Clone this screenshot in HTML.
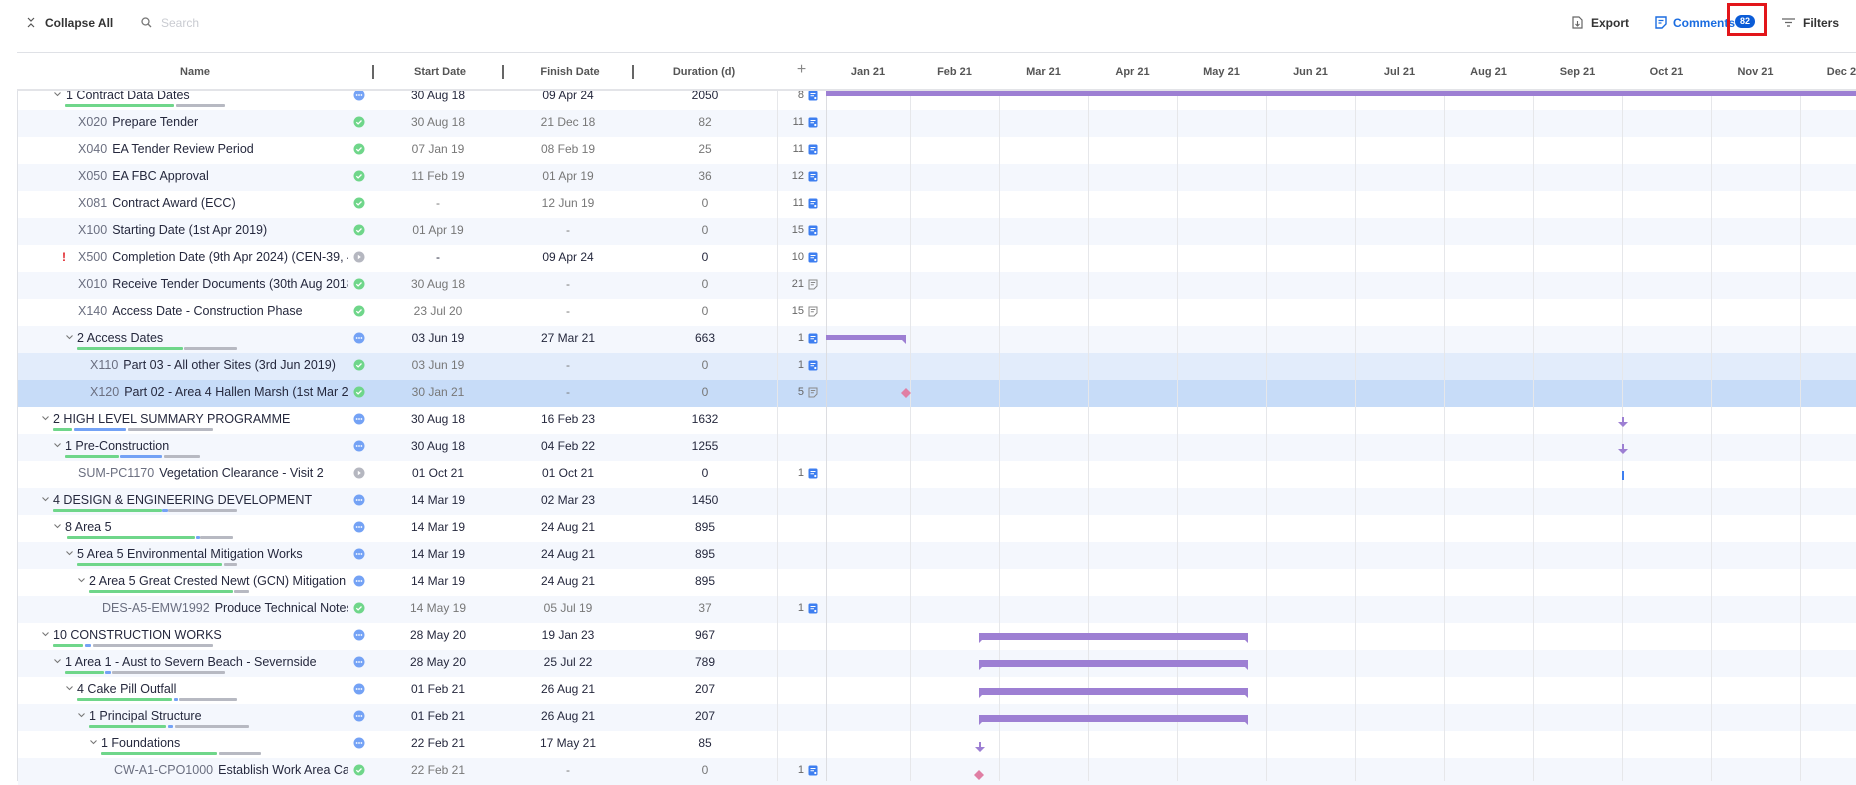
<!DOCTYPE html>
<html><head><meta charset="utf-8"><style>
*{margin:0;padding:0;box-sizing:border-box}
body{width:1856px;height:781px;overflow:hidden;background:#fff;font-family:"Liberation Sans",sans-serif;font-size:12px;color:#25283d;position:relative}
.a{position:absolute}
.tb{top:14px;line-height:18px;font-size:12px;color:#333;font-weight:bold}
.hd{position:absolute;top:52px;height:39px;left:17px;right:0;border-top:1px solid #dfe1e6;border-bottom:2px solid #e3e4e8;background:#fff;z-index:3}
.hl{position:absolute;top:12px;font-size:11px;font-weight:bold;color:#555;text-align:center;line-height:14px}
.sep{position:absolute;top:12px;width:2px;height:14px;background:#666}
.r{position:absolute;left:18px;right:0;height:27px}
.t{background:#f4f7fd}
.r>span{position:absolute;top:0;line-height:25px;white-space:nowrap}
.r>span.n{font-size:12.5px;overflow:hidden}
.c{color:#6b6f80;margin-right:5px}
.sd{left:360px;width:120px;text-align:center}
.fd{left:490px;width:120px;text-align:center}
.du{left:622px;width:130px;text-align:center}
.g{color:#777}
.cn{left:720px;width:66px;text-align:right;color:#666;font-size:11px}
.ci{position:absolute;left:790px;top:7px}
.st{position:absolute;left:335px;top:6px}
.ch{position:absolute;top:9px}
.pb{position:absolute;top:21px;height:3px;border-radius:1px}
.gr{background:#6fd68a}.bl{background:#74a2f5}.gy{background:#b7b9c2}
.vl{position:absolute;top:52px;bottom:0;width:1px;background:#e6e7ea;z-index:2}
.bar{position:absolute;height:5px;background:#9d7fd3;z-index:4}
</style></head><body>

<svg class="a" style="left:27px;top:17px" width="8" height="11" viewBox="0 0 8 11"><path d="M1 1l3 3 3-3M1 10l3-3 3 3" stroke="#555" fill="none" stroke-width="1.2"/></svg>
<span class="a tb" style="left:45px">Collapse All</span>
<svg class="a" style="left:141px;top:17px" width="11" height="11" viewBox="0 0 11 11"><circle cx="4.5" cy="4.5" r="3.5" stroke="#777" fill="none" stroke-width="1.3"/><path d="M7 7l3 3" stroke="#777" stroke-width="1.3"/></svg>
<span class="a tb" style="left:161px;color:#c9cbd1;font-weight:normal">Search</span>

<svg class="a" style="left:1572px;top:16px" width="11" height="13" viewBox="0 0 11 13"><path d="M1 1h6l3 3v8H1z" stroke="#666" fill="none" stroke-width="1.2"/><path d="M5.5 5v5M3.5 8l2 2 2-2" stroke="#666" fill="none" stroke-width="1.1"/></svg>
<span class="a tb" style="left:1591px">Export</span>
<svg class="a" style="left:1655px;top:16px" width="12" height="13" viewBox="0 0 12 13"><path d="M1 1h10v7l-4 4H1z" stroke="#1a6ce0" fill="none" stroke-width="1.4"/><path d="M3.5 4.5h5M3.5 7h3" stroke="#1a6ce0" stroke-width="1.3"/></svg>
<span class="a tb" style="left:1673px;color:#1a6ce0">Comments</span>
<div class="a" style="left:1735px;top:15px;width:20px;height:13px;border-radius:7px;background:#0b5cd7;color:#fff;font-size:9px;font-weight:bold;text-align:center;line-height:13px">82</div>
<div class="a" style="left:1727px;top:3px;width:40px;height:33px;border:3px solid #e2161a"></div>
<svg class="a" style="left:1782px;top:18px" width="13" height="9" viewBox="0 0 13 9"><path d="M0 1h13M3 4.5h7M5 8h3" stroke="#666" stroke-width="1.3"/></svg>
<span class="a tb" style="left:1803px">Filters</span>

<div class="hd">
<span class="hl" style="left:0;width:356px">Name</span>
<div class="sep" style="left:355px"></div>
<span class="hl" style="left:360px;width:126px">Start Date</span>
<div class="sep" style="left:485px"></div>
<span class="hl" style="left:490px;width:126px">Finish Date</span>
<div class="sep" style="left:615px"></div>
<span class="hl" style="left:622px;width:130px">Duration (d)</span>
<span class="hl" style="left:760px;width:49px;font-size:16px;font-weight:normal;color:#888;top:10px">+</span>
<span class="hl" style="left:809px;width:84px">Jan 21</span>
<span class="hl" style="left:893px;width:89px">Feb 21</span>
<span class="hl" style="left:982px;width:89px">Mar 21</span>
<span class="hl" style="left:1071px;width:89px">Apr 21</span>
<span class="hl" style="left:1160px;width:89px">May 21</span>
<span class="hl" style="left:1249px;width:89px">Jun 21</span>
<span class="hl" style="left:1338px;width:89px">Jul 21</span>
<span class="hl" style="left:1427px;width:89px">Aug 21</span>
<span class="hl" style="left:1516px;width:89px">Sep 21</span>
<span class="hl" style="left:1605px;width:89px">Oct 21</span>
<span class="hl" style="left:1694px;width:89px">Nov 21</span>
<span class="hl" style="left:1783px;width:89px">Dec 21</span>
</div>

<div class="vl" style="left:17px;background:#dfe1e6"></div>
<div class="vl" style="left:777px"></div>
<div class="vl" style="left:826px;background:#dcdde1"></div>
<div class="vl" style="left:910px"></div>
<div class="vl" style="left:999px"></div>
<div class="vl" style="left:1088px"></div>
<div class="vl" style="left:1177px"></div>
<div class="vl" style="left:1266px"></div>
<div class="vl" style="left:1355px"></div>
<div class="vl" style="left:1444px"></div>
<div class="vl" style="left:1533px"></div>
<div class="vl" style="left:1622px"></div>
<div class="vl" style="left:1711px"></div>
<div class="vl" style="left:1800px"></div>

<svg width="0" height="0" style="position:absolute"><defs>
<g id="ok"><circle cx="6" cy="6" r="5.5" fill="#6fd68a"/><path d="M3.3 6.2l1.8 1.7 3.4-3.4" stroke="#fff" fill="none" stroke-width="1.3"/></g>
<g id="dt"><circle cx="6" cy="6" r="5.5" fill="#74a2f5"/><circle cx="3.6" cy="6" r=".9" fill="#fff"/><circle cx="6" cy="6" r=".9" fill="#fff"/><circle cx="8.4" cy="6" r=".9" fill="#fff"/></g>
<g id="gs"><circle cx="6" cy="6" r="5.5" fill="#b5b7c0"/><path d="M4.8 3.8l3 2.2-3 2.2z" fill="#fff"/></g>
<g id="cb"><rect x=".5" y=".5" width="9" height="10" rx="1.5" fill="#3d7ef0"/><path d="M2.5 3.5h5M2.5 5.8h3.5" stroke="#fff" stroke-width="1"/><circle cx="7.3" cy="8" r="1.1" fill="#fff"/></g>
<g id="cg"><path d="M1 1h8v6l-3 3H1z" stroke="#888" fill="none" stroke-width="1"/><path d="M2.8 3.5h4.4M2.8 5.8h3" stroke="#888" stroke-width="1"/></g>
<g id="cv"><path d="M.5 .5l3 3 3-3" stroke="#777" fill="none" stroke-width="1.1"/></g>
</defs></svg>

<div class="r" style="top:83px"><svg class="ch" style="left:36px" width="7" height="5"><use href="#cv"/></svg><span class="n" style="left:48px;width:282px">1 Contract Data Dates</span><div class="pb gr" style="left:47px;width:109px"></div><div class="pb gy" style="left:158px;width:49px"></div><svg class="st" width="12" height="12"><use href="#dt"/></svg><span class="sd">30 Aug 18</span><span class="fd">09 Apr 24</span><span class="du">2050</span><span class="cn">8</span><svg class="ci" width="10" height="11"><use href="#cb"/></svg></div>
<div class="r t" style="top:110px"><span class="n" style="left:60px;width:270px"><span class="c">X020</span>Prepare Tender</span><svg class="st" width="12" height="12"><use href="#ok"/></svg><span class="sd g">30 Aug 18</span><span class="fd g">21 Dec 18</span><span class="du g">82</span><span class="cn">11</span><svg class="ci" width="10" height="11"><use href="#cb"/></svg></div>
<div class="r" style="top:137px"><span class="n" style="left:60px;width:270px"><span class="c">X040</span>EA Tender Review Period</span><svg class="st" width="12" height="12"><use href="#ok"/></svg><span class="sd g">07 Jan 19</span><span class="fd g">08 Feb 19</span><span class="du g">25</span><span class="cn">11</span><svg class="ci" width="10" height="11"><use href="#cb"/></svg></div>
<div class="r t" style="top:164px"><span class="n" style="left:60px;width:270px"><span class="c">X050</span>EA FBC Approval</span><svg class="st" width="12" height="12"><use href="#ok"/></svg><span class="sd g">11 Feb 19</span><span class="fd g">01 Apr 19</span><span class="du g">36</span><span class="cn">12</span><svg class="ci" width="10" height="11"><use href="#cb"/></svg></div>
<div class="r" style="top:191px"><span class="n" style="left:60px;width:270px"><span class="c">X081</span>Contract Award (ECC)</span><svg class="st" width="12" height="12"><use href="#ok"/></svg><span class="sd g">-</span><span class="fd g">12 Jun 19</span><span class="du g">0</span><span class="cn">11</span><svg class="ci" width="10" height="11"><use href="#cb"/></svg></div>
<div class="r t" style="top:218px"><span class="n" style="left:60px;width:270px"><span class="c">X100</span>Starting Date (1st Apr 2019)</span><svg class="st" width="12" height="12"><use href="#ok"/></svg><span class="sd g">01 Apr 19</span><span class="fd g">-</span><span class="du g">0</span><span class="cn">15</span><svg class="ci" width="10" height="11"><use href="#cb"/></svg></div>
<div class="r" style="top:245px"><span style="left:44px;color:#e0242a;font-weight:bold">!</span><span class="n" style="left:60px;width:270px"><span class="c">X500</span>Completion Date (9th Apr 2024) (CEN-39, 40)</span><svg class="st" width="12" height="12"><use href="#gs"/></svg><span class="sd">-</span><span class="fd">09 Apr 24</span><span class="du">0</span><span class="cn">10</span><svg class="ci" width="10" height="11"><use href="#cb"/></svg></div>
<div class="r t" style="top:272px"><span class="n" style="left:60px;width:270px"><span class="c">X010</span>Receive Tender Documents (30th Aug 2018)</span><svg class="st" width="12" height="12"><use href="#ok"/></svg><span class="sd g">30 Aug 18</span><span class="fd g">-</span><span class="du g">0</span><span class="cn">21</span><svg class="ci" width="10" height="11"><use href="#cg"/></svg></div>
<div class="r" style="top:299px"><span class="n" style="left:60px;width:270px"><span class="c">X140</span>Access Date - Construction Phase</span><svg class="st" width="12" height="12"><use href="#ok"/></svg><span class="sd g">23 Jul 20</span><span class="fd g">-</span><span class="du g">0</span><span class="cn">15</span><svg class="ci" width="10" height="11"><use href="#cg"/></svg></div>
<div class="r t" style="top:326px"><svg class="ch" style="left:48px" width="7" height="5"><use href="#cv"/></svg><span class="n" style="left:59px;width:271px">2 Access Dates</span><div class="pb gr" style="left:59px;width:106px"></div><div class="pb gy" style="left:166px;width:53px"></div><svg class="st" width="12" height="12"><use href="#dt"/></svg><span class="sd">03 Jun 19</span><span class="fd">27 Mar 21</span><span class="du">663</span><span class="cn">1</span><svg class="ci" width="10" height="11"><use href="#cb"/></svg></div>
<div class="r" style="top:353px;background:#e2ecfb"><span class="n" style="left:72px;width:258px"><span class="c">X110</span>Part 03 - All other Sites (3rd Jun 2019)</span><svg class="st" width="12" height="12"><use href="#ok"/></svg><span class="sd g">03 Jun 19</span><span class="fd g">-</span><span class="du g">0</span><span class="cn">1</span><svg class="ci" width="10" height="11"><use href="#cb"/></svg></div>
<div class="r" style="top:380px;background:#c7dcf8"><span class="n" style="left:72px;width:258px"><span class="c">X120</span>Part 02 - Area 4 Hallen Marsh (1st Mar 2021)</span><svg class="st" width="12" height="12"><use href="#ok"/></svg><span class="sd g">30 Jan 21</span><span class="fd g">-</span><span class="du g">0</span><span class="cn">5</span><svg class="ci" width="10" height="11"><use href="#cg"/></svg></div>
<div class="r" style="top:407px"><svg class="ch" style="left:24px" width="7" height="5"><use href="#cv"/></svg><span class="n" style="left:35px;width:295px">2 HIGH LEVEL SUMMARY PROGRAMME</span><div class="pb gr" style="left:35px;width:19px"></div><div class="pb bl" style="left:56px;width:52px"></div><div class="pb gy" style="left:110px;width:85px"></div><svg class="st" width="12" height="12"><use href="#dt"/></svg><span class="sd">30 Aug 18</span><span class="fd">16 Feb 23</span><span class="du">1632</span></div>
<div class="r t" style="top:434px"><svg class="ch" style="left:36px" width="7" height="5"><use href="#cv"/></svg><span class="n" style="left:47px;width:283px">1 Pre-Construction</span><div class="pb gr" style="left:47px;width:54px"></div><div class="pb bl" style="left:102px;width:42px"></div><div class="pb gy" style="left:146px;width:36px"></div><svg class="st" width="12" height="12"><use href="#dt"/></svg><span class="sd">30 Aug 18</span><span class="fd">04 Feb 22</span><span class="du">1255</span></div>
<div class="r" style="top:461px"><span class="n" style="left:60px;width:270px"><span class="c">SUM-PC1170</span>Vegetation Clearance - Visit 2</span><svg class="st" width="12" height="12"><use href="#gs"/></svg><span class="sd">01 Oct 21</span><span class="fd">01 Oct 21</span><span class="du">0</span><span class="cn">1</span><svg class="ci" width="10" height="11"><use href="#cb"/></svg></div>
<div class="r t" style="top:488px"><svg class="ch" style="left:24px" width="7" height="5"><use href="#cv"/></svg><span class="n" style="left:35px;width:295px">4 DESIGN &amp; ENGINEERING DEVELOPMENT</span><div class="pb gr" style="left:35px;width:109px"></div><div class="pb bl" style="left:144px;width:6px"></div><div class="pb gy" style="left:150px;width:69px"></div><svg class="st" width="12" height="12"><use href="#dt"/></svg><span class="sd">14 Mar 19</span><span class="fd">02 Mar 23</span><span class="du">1450</span></div>
<div class="r" style="top:515px"><svg class="ch" style="left:36px" width="7" height="5"><use href="#cv"/></svg><span class="n" style="left:47px;width:283px">8 Area 5</span><div class="pb gr" style="left:49px;width:128px"></div><div class="pb bl" style="left:178px;width:4px"></div><div class="pb gy" style="left:182px;width:33px"></div><svg class="st" width="12" height="12"><use href="#dt"/></svg><span class="sd">14 Mar 19</span><span class="fd">24 Aug 21</span><span class="du">895</span></div>
<div class="r t" style="top:542px"><svg class="ch" style="left:48px" width="7" height="5"><use href="#cv"/></svg><span class="n" style="left:59px;width:271px">5 Area 5 Environmental Mitigation Works</span><div class="pb gr" style="left:59px;width:145px"></div><div class="pb gy" style="left:206px;width:13px"></div><svg class="st" width="12" height="12"><use href="#dt"/></svg><span class="sd">14 Mar 19</span><span class="fd">24 Aug 21</span><span class="du">895</span></div>
<div class="r" style="top:569px"><svg class="ch" style="left:60px" width="7" height="5"><use href="#cv"/></svg><span class="n" style="left:71px;width:259px">2 Area 5 Great Crested Newt (GCN) Mitigation</span><div class="pb gr" style="left:71px;width:144px"></div><div class="pb gy" style="left:216px;width:15px"></div><svg class="st" width="12" height="12"><use href="#dt"/></svg><span class="sd">14 Mar 19</span><span class="fd">24 Aug 21</span><span class="du">895</span></div>
<div class="r t" style="top:596px"><span class="n" style="left:84px;width:246px"><span class="c">DES-A5-EMW1992</span>Produce Technical Notes</span><svg class="st" width="12" height="12"><use href="#ok"/></svg><span class="sd g">14 May 19</span><span class="fd g">05 Jul 19</span><span class="du g">37</span><span class="cn">1</span><svg class="ci" width="10" height="11"><use href="#cb"/></svg></div>
<div class="r" style="top:623px"><svg class="ch" style="left:24px" width="7" height="5"><use href="#cv"/></svg><span class="n" style="left:35px;width:295px">10 CONSTRUCTION WORKS</span><div class="pb gr" style="left:35px;width:30px"></div><div class="pb bl" style="left:67px;width:6px"></div><div class="pb gy" style="left:75px;width:120px"></div><svg class="st" width="12" height="12"><use href="#dt"/></svg><span class="sd">28 May 20</span><span class="fd">19 Jan 23</span><span class="du">967</span></div>
<div class="r t" style="top:650px"><svg class="ch" style="left:36px" width="7" height="5"><use href="#cv"/></svg><span class="n" style="left:47px;width:283px">1 Area 1 - Aust to Severn Beach - Severnside</span><div class="pb gr" style="left:47px;width:39px"></div><div class="pb bl" style="left:87px;width:6px"></div><div class="pb gy" style="left:94px;width:113px"></div><svg class="st" width="12" height="12"><use href="#dt"/></svg><span class="sd">28 May 20</span><span class="fd">25 Jul 22</span><span class="du">789</span></div>
<div class="r" style="top:677px"><svg class="ch" style="left:48px" width="7" height="5"><use href="#cv"/></svg><span class="n" style="left:59px;width:271px">4 Cake Pill Outfall</span><div class="pb gr" style="left:59px;width:95px"></div><div class="pb bl" style="left:156px;width:4px"></div><div class="pb gy" style="left:161px;width:58px"></div><svg class="st" width="12" height="12"><use href="#dt"/></svg><span class="sd">01 Feb 21</span><span class="fd">26 Aug 21</span><span class="du">207</span></div>
<div class="r t" style="top:704px"><svg class="ch" style="left:60px" width="7" height="5"><use href="#cv"/></svg><span class="n" style="left:71px;width:259px">1 Principal Structure</span><div class="pb gr" style="left:71px;width:77px"></div><div class="pb bl" style="left:150px;width:5px"></div><div class="pb gy" style="left:157px;width:74px"></div><svg class="st" width="12" height="12"><use href="#dt"/></svg><span class="sd">01 Feb 21</span><span class="fd">26 Aug 21</span><span class="du">207</span></div>
<div class="r" style="top:731px"><svg class="ch" style="left:72px" width="7" height="5"><use href="#cv"/></svg><span class="n" style="left:83px;width:247px">1 Foundations</span><div class="pb gr" style="left:83px;width:116px"></div><div class="pb gy" style="left:201px;width:42px"></div><svg class="st" width="12" height="12"><use href="#dt"/></svg><span class="sd">22 Feb 21</span><span class="fd">17 May 21</span><span class="du">85</span></div>
<div class="r t" style="top:758px"><span class="n" style="left:96px;width:234px"><span class="c">CW-A1-CPO1000</span>Establish Work Area Cabins</span><svg class="st" width="12" height="12"><use href="#ok"/></svg><span class="sd g">22 Feb 21</span><span class="fd g">-</span><span class="du g">0</span><span class="cn">1</span><svg class="ci" width="10" height="11"><use href="#cb"/></svg></div>

<div class="bar" style="left:826px;right:0;top:91px;height:5px"></div>
<svg class="a" style="left:826px;top:335px;z-index:4" width="81" height="10"><path d="M0 0h80v9l-4-4H0z" fill="#9d7fd3"/></svg>
<svg class="a" style="left:900px;top:387px;z-index:4" width="12" height="12"><path d="M6 1l5 5-5 5-5-5z" fill="#e07fa4"/></svg>
<svg class="a" style="left:1617px;top:417px;z-index:4" width="12" height="11"><path d="M5 0h2v5h4l-5 5-5-5h4z" fill="#9d7fd3"/></svg>
<svg class="a" style="left:1617px;top:444px;z-index:4" width="12" height="11"><path d="M5 0h2v5h4l-5 5-5-5h4z" fill="#9d7fd3"/></svg>
<div class="a" style="left:1622px;top:471px;width:2px;height:9px;background:#3d7ef0;z-index:4"></div>
<svg class="a" style="left:979px;top:633px;z-index:4" width="270" height="11"><path d="M0 0h269v10l-3-3H3l-3 3z" fill="#9d7fd3"/></svg>
<svg class="a" style="left:979px;top:660px;z-index:4" width="270" height="11"><path d="M0 0h269v10l-3-3H3l-3 3z" fill="#9d7fd3"/></svg>
<svg class="a" style="left:979px;top:688px;z-index:4" width="270" height="11"><path d="M0 0h269v10l-3-3H3l-3 3z" fill="#9d7fd3"/></svg>
<svg class="a" style="left:979px;top:715px;z-index:4" width="270" height="11"><path d="M0 0h269v10l-3-3H3l-3 3z" fill="#9d7fd3"/></svg>
<svg class="a" style="left:974px;top:742px;z-index:4" width="12" height="11"><path d="M5 0h2v5h4l-5 5-5-5h4z" fill="#9d7fd3"/></svg>
<svg class="a" style="left:973px;top:769px;z-index:4" width="12" height="12"><path d="M6 1l5 5-5 5-5-5z" fill="#e07fa4"/></svg>
</body></html>
